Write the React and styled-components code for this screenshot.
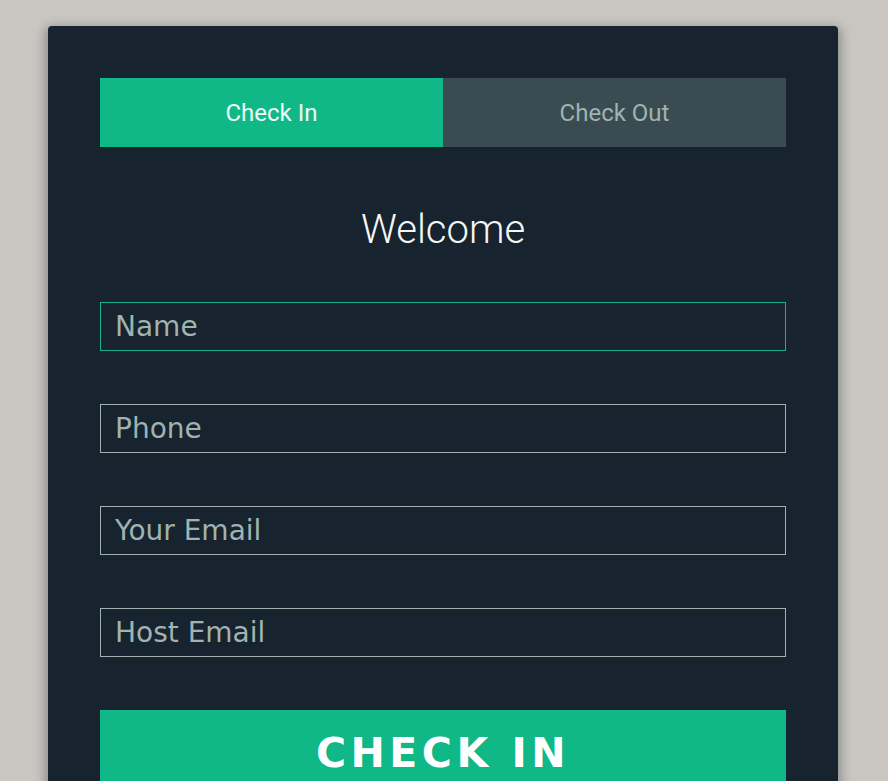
import React, { useState } from 'react';
import styled, { createGlobalStyle } from 'styled-components';

const GlobalStyle = createGlobalStyle`
  html, body {
    margin: 0;
    padding: 0;
    background: #c9c6c1;
  }
  * {
    box-sizing: border-box;
  }
`;

const FIELDS = [
  { name: 'name', placeholder: 'Name', type: 'text' },
  { name: 'phone', placeholder: 'Phone', type: 'tel' },
  { name: 'email', placeholder: 'Your Email', type: 'email' },
  { name: 'host', placeholder: 'Host Email', type: 'email' },
];

const App = () => {
  const [tab, setTab] = useState('in');

  return (
    <>
      <GlobalStyle />
      <Card>
        <TabList>
          <Tab active={tab === 'in'} onClick={() => setTab('in')}>Check In</Tab>
          <Tab active={tab === 'out'} onClick={() => setTab('out')}>Check Out</Tab>
        </TabList>
        <Title>Welcome</Title>
        <Form onSubmit={(e) => e.preventDefault()}>
          {FIELDS.map((field, i) => (
            <Field
              key={field.name}
              name={field.name}
              type={field.type}
              placeholder={field.placeholder}
              focused={i === 0}
            />
          ))}
          <SubmitButton type="submit">Check In</SubmitButton>
        </Form>
      </Card>
    </>
  );
};

export default App;

const Card = styled.div`
  width: 790px;
  margin: 26px 0 0 48px;
  padding: 52px;
  background: #17232e;
  border-radius: 4px;
  box-shadow: 0 4px 10px 4px rgba(19, 35, 47, 0.3);
`;

const TabList = styled.div`
  display: grid;
  grid-template-columns: 1fr 1fr;
  height: 69px;
`;

const Tab = styled.button`
  border: 0;
  margin: 0;
  padding: 0;
  cursor: pointer;
  font-family: Roboto, "Open Sans", sans-serif;
  font-size: 24px;
  font-weight: 400;
  background: ${(p) => (p.active ? '#10b887' : '#3a4c51')};
  color: ${(p) => (p.active ? '#eefbf6' : '#a0b3b0')};
`;

const Title = styled.h1`
  margin: 58px 0 0;
  height: 50px;
  line-height: 50px;
  text-align: center;
  font-family: Roboto, "Open Sans", sans-serif;
  font-size: 40px;
  font-weight: 300;
  color: #f4f7f7;
`;

const Form = styled.form`
  display: flex;
  flex-direction: column;
  gap: 53px;
  margin-top: 47px;
`;

const Field = styled.input`
  display: block;
  width: 100%;
  height: 49px;
  padding: 0 14px;
  background: transparent;
  border: 1px solid ${(p) => (p.focused ? '#1ab188' : '#a0b3b0')};
  border-radius: 0;
  outline: none;
  color: #ffffff;
  font-family: "DejaVu Sans", sans-serif;
  font-size: 28px;

  &::placeholder {
    color: #a0b3b0;
  }
`;

const SubmitButton = styled.button`
  display: block;
  width: 100%;
  height: 85px;
  border: 0;
  border-radius: 0;
  padding: 0;
  cursor: pointer;
  background: #10b887;
  color: #ffffff;
  font-family: "DejaVu Sans", sans-serif;
  font-size: 41px;
  font-weight: 700;
  letter-spacing: 0.11em;
  text-transform: uppercase;
`;
